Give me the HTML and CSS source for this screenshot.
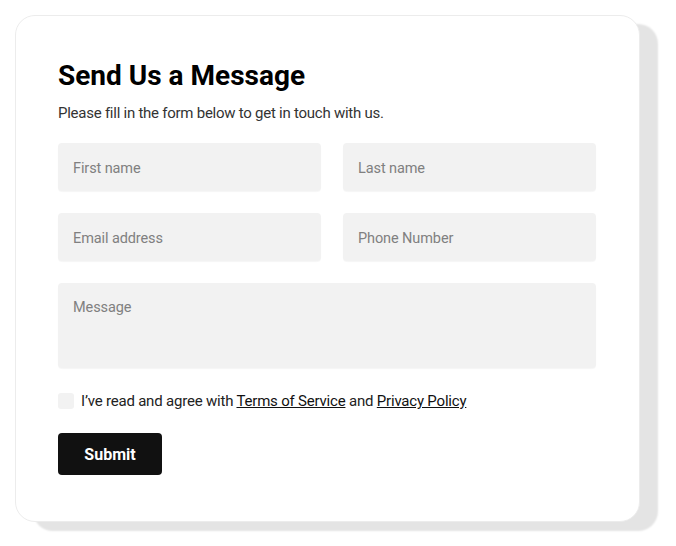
FILE: index.html
```html
<!DOCTYPE html>
<html lang="en">
<head>
    <meta charset="UTF-8">
    <meta name="viewport" content="width=device-width, initial-scale=1.0">
    <title>Send Us a Message</title>
    <link rel="stylesheet" href="styles.css">
</head>
<body>
    <div class="card">
        <h1 class="title">Send Us a Message</h1>
        <p class="subtitle">Please fill in the form below to get in touch with us.</p>

        <form class="form">
            <div class="row">
                <input class="field" type="text" placeholder="First name">
                <input class="field" type="text" placeholder="Last name">
            </div>
            <div class="row">
                <input class="field" type="email" placeholder="Email address">
                <input class="field" type="tel" placeholder="Phone Number">
            </div>
            <textarea class="field message" placeholder="Message"></textarea>

            <label class="agree">
                <span class="check"></span>
                <span>I’ve read and agree with <a href="#">Terms of Service</a> and <a href="#">Privacy Policy</a></span>
            </label>

            <button class="submit-btn" type="button">Submit</button>
        </form>
    </div>
</body>
</html>
```

FILE: styles.css
```css
* {
    margin: 0;
    padding: 0;
    box-sizing: border-box;
}

body {
    font-family: 'Roboto', 'Liberation Sans', sans-serif;
    background: #fff;
    color: #111;
    padding: 15px;
}

.card {
    width: 625px;
    height: 507px;
    padding: 42px 42px 0;
    background: #fff;
    border: 1px solid #ececec;
    border-radius: 20px;
    box-shadow: 18px 9px 2px #e4e4e4;
}

.title {
    font-size: 28px;
    font-weight: 700;
    line-height: 36px;
    color: #000;
}

.subtitle {
    margin-top: 9px;
    font-size: 15px;
    line-height: 20px;
    letter-spacing: -0.25px;
    color: #333;
}

.form {
    margin-top: 20px;
    display: flex;
    flex-direction: column;
    gap: 22px;
}

.row {
    display: grid;
    grid-template-columns: 263px 253px;
    gap: 22px;
}

.field {
    display: block;
    width: 100%;
    height: 48px;
    padding: 2px 15px 0;
    font-family: inherit;
    font-size: 14.5px;
    letter-spacing: -0.1px;
    color: #222;
    background: #f2f2f2;
    border: none;
    border-radius: 4px;
    box-shadow: 0 1px 1px rgba(0, 0, 0, 0.04);
    outline: none;
}

.field::placeholder {
    color: #808080;
}

.message {
    width: 538px;
    height: 85px;
    padding: 15px;
    line-height: 20px;
    resize: none;
}

.agree {
    display: flex;
    align-items: center;
    gap: 7px;
    margin-top: 1px;
    font-size: 15px;
    line-height: 20px;
    letter-spacing: -0.2px;
    color: #222;
}

.agree a {
    color: #111;
}

.check {
    width: 16px;
    height: 16px;
    background: #f2f2f2;
    border-radius: 3px;
}

.submit-btn {
    width: 104px;
    height: 42px;
    background: #111;
    color: #fff;
    border: none;
    border-radius: 4px;
    font-family: inherit;
    font-size: 16px;
    font-weight: 700;
    cursor: pointer;
}
```
